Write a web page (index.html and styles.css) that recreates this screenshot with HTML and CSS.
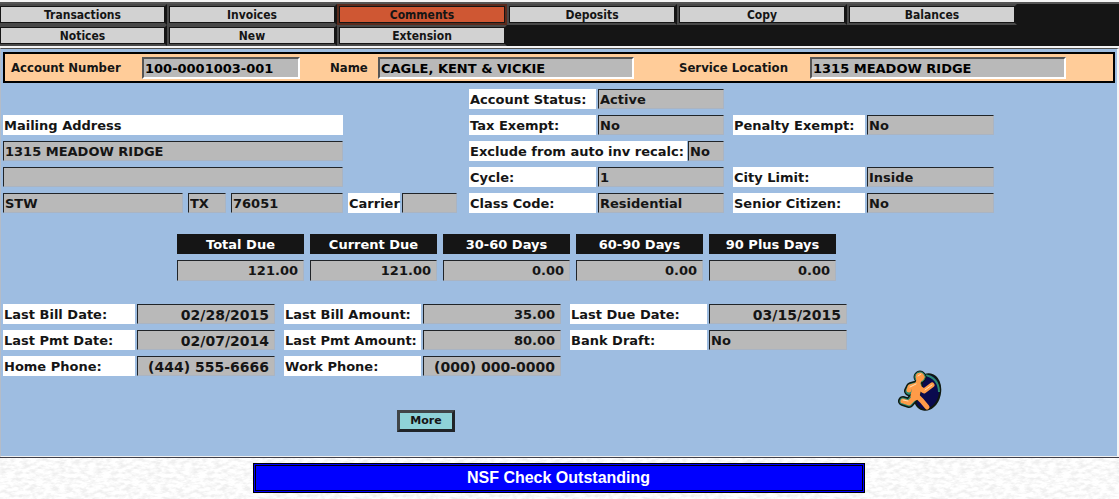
FILE: index.html
```
<!DOCTYPE html>
<html lang="en">
<head>
<meta charset="utf-8">
<title>Customer Account</title>
<link rel="stylesheet" href="styles.css">
</head>
<body>
<nav class="tabs" aria-label="Account sections">
  <button class="tab" type="button">Transactions</button>
  <button class="tab" type="button">Invoices</button>
  <button class="tab tab-active" type="button">Comments</button>
  <button class="tab" type="button">Deposits</button>
  <button class="tab" type="button">Copy</button>
  <button class="tab" type="button">Balances</button>
  <button class="tab" type="button">Notices</button>
  <button class="tab" type="button">New</button>
  <button class="tab" type="button">Extension</button>
</nav>

<main class="panel">
  <section class="account-bar">
    <label class="bar-label bar-wide" for="acct">Account Number</label>
    <input class="bar-input bar-number" id="acct" value="100-0001003-001" readonly>
    <label class="bar-label bar-name" for="name">Name</label>
    <input class="bar-input" id="name" value="CAGLE, KENT &amp; VICKIE" readonly>
    <label class="bar-label bar-wide bar-service" for="service">Service Location</label>
    <input class="bar-input" id="service" value="1315 MEADOW RIDGE" readonly>
  </section>

  <div class="details">
    <section class="address">
      <label class="label address-line" for="addr1">Mailing Address</label>
      <input class="value address-line" id="addr1" value="1315 MEADOW RIDGE" readonly>
      <input class="value address-line" aria-label="Address line 2" value="" readonly>
      <div class="city-row">
        <input class="value city" aria-label="City" value="STW" readonly>
        <input class="value state" aria-label="State" value="TX" readonly>
        <input class="value zip" aria-label="Zip" value="76051" readonly>
        <label class="label carrier-label" for="carrier">Carrier</label>
        <input class="value carrier" id="carrier" value="" readonly>
      </div>
    </section>

    <section class="status">
      <div class="pair"><label class="label" for="st">Account Status:</label><input class="value" id="st" value="Active" readonly></div>
      <div class="pair"><label class="label" for="tax">Tax Exempt:</label><input class="value" id="tax" value="No" readonly></div>
      <div class="pair pair-long"><label class="label" for="recalc">Exclude from auto inv recalc:</label><input class="value" id="recalc" value="No" readonly></div>
      <div class="pair"><label class="label" for="cycle">Cycle:</label><input class="value" id="cycle" value="1" readonly></div>
      <div class="pair"><label class="label" for="class">Class Code:</label><input class="value" id="class" value="Residential" readonly></div>
    </section>

    <section class="flags">
      <div class="pair pair-spaced"><label class="label" for="pen">Penalty Exempt:</label><input class="value" id="pen" value="No" readonly></div>
      <div class="pair pair-spaced"><label class="label" for="limit">City Limit:</label><input class="value" id="limit" value="Inside" readonly></div>
      <div class="pair"><label class="label" for="senior">Senior Citizen:</label><input class="value" id="senior" value="No" readonly></div>
    </section>
  </div>

  <table class="aging">
    <thead>
      <tr><th>Total Due</th><th>Current Due</th><th>30-60 Days</th><th>60-90 Days</th><th>90 Plus Days</th></tr>
    </thead>
    <tbody>
      <tr><td>121.00</td><td>121.00</td><td>0.00</td><td>0.00</td><td>0.00</td></tr>
    </tbody>
  </table>

  <section class="history">
    <div class="column column-first">
      <div class="pair"><label class="label" for="bill">Last Bill Date:</label><input class="value right large" id="bill" value="02/28/2015" readonly></div>
      <div class="pair"><label class="label" for="pmt">Last Pmt Date:</label><input class="value right large" id="pmt" value="02/07/2014" readonly></div>
      <div class="pair"><label class="label" for="home">Home Phone:</label><input class="value right large" id="home" value="(444) 555-6666" readonly></div>
    </div>
    <div class="column">
      <div class="pair"><label class="label" for="billamt">Last Bill Amount:</label><input class="value right" id="billamt" value="35.00" readonly></div>
      <div class="pair"><label class="label" for="pmtamt">Last Pmt Amount:</label><input class="value right" id="pmtamt" value="80.00" readonly></div>
      <div class="pair"><label class="label" for="work">Work Phone:</label><input class="value right large" id="work" value="(000) 000-0000" readonly></div>
    </div>
    <div class="column">
      <div class="pair"><label class="label" for="due">Last Due Date:</label><input class="value right large" id="due" value="03/15/2015" readonly></div>
      <div class="pair"><label class="label" for="draft">Bank Draft:</label><input class="value" id="draft" value="No" readonly></div>
    </div>
  </section>

  <div class="actions">
    <button class="more" type="button">More</button>
    <button class="exit" type="button" aria-label="Exit">
      <svg class="exit-icon" viewBox="0 0 44 44" aria-hidden="true">
        <ellipse cx="29" cy="22" rx="13" ry="18" fill="#0a0a4e" stroke="#10180f" stroke-width="2" transform="rotate(12 29 22)"/>
        <path d="M26 5C36 6 41 13 41 22" fill="none" stroke="#2c8a72" stroke-width="2"/>
        <g fill="none" stroke="#10180f" stroke-linecap="round" stroke-linejoin="round">
          <circle cx="22" cy="7" r="6" fill="#10180f"/>
          <path d="M20 15L13 17L11 21M19 17L17 26L11 33L5 31" stroke-width="10"/>
        </g>
        <g fill="none" stroke="#2c8a72" stroke-linecap="round" stroke-linejoin="round">
          <circle cx="22" cy="7" r="5" fill="#2c8a72"/>
          <path d="M20 15L13 17L11 21M19 17L17 26L11 33L5 31" stroke-width="7"/>
        </g>
        <g fill="none" stroke="#ff9b48" stroke-linecap="round" stroke-linejoin="round">
          <circle cx="22" cy="7" r="4" fill="#ff9b48"/>
          <path d="M21 10L19 16M19 15L12 17L11 20M20 17L26 21L34 15M17 27L11 33L5 31M19 26L24 31L29 37" stroke-width="5"/>
          <path d="M19 17L17 26" stroke-width="9"/>
        </g>
        <path d="M20 6L23 4M12 17L18 14M27 20L34 15M5 30L10 31" fill="none" stroke="#ffe0b0" stroke-width="1" stroke-linecap="round"/>
      </svg>
    </button>
  </div>
</main>

<footer class="footer">
  <p class="notice">NSF Check Outstanding</p>
</footer>
</body>
</html>
```
FILE: styles.css
```
* { box-sizing: border-box; }

body {
  margin: 0;
  min-height: 100vh;
  display: flex;
  flex-direction: column;
  background: #f4f4f4;
  color: #151515;
  font: bold 13px/20px Verdana, "DejaVu Sans", sans-serif;
}

input, button { font: inherit; color: inherit; margin: 0; border-radius: 0; }

.tabs {
  display: flex;
  flex-wrap: wrap;
  margin-top: 2px;
  padding-right: 99px;
  border-top: 2px solid #555;
  background: #151515;
}

.tab {
  flex: 0 0 170px;
  height: 21px;
  padding: 1px 0 0;
  border: 2px solid #484848;
  border-right-color: #151515;
  background: #d2d2d2;
  box-shadow: inset 0 0 0 1px #151515;
  font: bold 12px/14px Tahoma, "DejaVu Sans Condensed", "DejaVu Sans", sans-serif;
}

.tab:nth-child(6n + 1) { flex-basis: 167px; border-left: 0; }
.tab-active { background: #cf5733; border-color: #5a2a1c; }

.panel {
  flex: 0 0 auto;
  border-top: 1px solid #505050;
  border-right: 2px solid #f4f4f4;
  border-left: 1px solid #b4bcc8;
  border-bottom: 1px solid #f0f0f0;
  margin-top: 2px;
  padding: 3px 2px 24px;
  background: #9ebde1;
}

.account-bar {
  display: flex;
  align-items: center;
  height: 31px;
  padding-left: 5px;
  border: 2px solid #000;
  background: #fc9;
}

.bar-label { font: bold 13px/20px Tahoma, "DejaVu Sans Condensed", "DejaVu Sans", sans-serif; }
.bar-wide { flex: 0 0 132px; padding-left: 1px; }
.bar-name { flex: 0 0 48px; margin-left: 30px; }
.bar-service { margin-left: 44px; }

.bar-input {
  flex: 0 1 256px;
  min-width: 0;
  height: 22px;
  padding: 1px 1px 0;
  border: 2px solid;
  border-color: #555 #fff #fff #555;
  background: #b9b9b9;
  color: #000;
}
.bar-number { flex-basis: 158px; }

.details { display: flex; align-items: flex-start; margin-top: 6px; }
.address, .status, .flags, .column { display: flex; flex-direction: column; gap: 6px; }
.address { width: 454px; margin-top: 26px; }
.address-line { width: 340px; }
.city-row { display: flex; gap: 5px; }
.city { width: 180px; }
.state { width: 38px; }
.zip { width: 112px; }
.carrier-label { width: 52px; margin-right: -3px; }
.carrier { width: 55px; }
.status { width: 255px; margin-left: 12px; }
.flags { width: 261px; margin-left: 9px; }
.pair-spaced { margin-top: 26px; }

.label {
  height: 20px;
  padding: 1px 0 0 1px;
  background: #fff;
  line-height: 19px;
  white-space: nowrap;
}

.value {
  min-width: 0;
  height: 20px;
  padding: 1px 1px 0;
  border: 1px solid;
  border-color: #202428 #aab4c2 #aab4c2 #202428;
  background: #b9b9b9;
}
.right { padding-right: 5px; text-align: right; }
.large { font-size: 14px; }

.pair { display: grid; grid-template-columns: 127px 1fr; gap: 2px; }
.pair-long { grid-template-columns: 218px 1fr; gap: 1px; }
.flags .pair { grid-template-columns: 132px 1fr; }

.aging { margin: 15px 0 0 168px; border-spacing: 6px; }
.aging th, .aging td { width: 127px; height: 20px; padding: 1px 0 0; line-height: 18px; }
.aging th { background: #151515; color: #fff; text-align: center; }
.aging td {
  padding-right: 5px;
  border: 1px solid;
  border-color: #202428 #aab4c2 #aab4c2 #202428;
  background: #b9b9b9;
  text-align: right;
}

.history { display: flex; align-items: flex-start; gap: 9px; margin-top: 17px; }
.column { width: 277px; }
.column .pair { grid-template-columns: 137px 1fr; }
.column-first { width: 272px; }
.column-first .pair { grid-template-columns: 132px 1fr; }

.actions { display: flex; align-items: flex-end; margin-top: -6px; padding-left: 394px; height: 62px; }
.more {
  width: 58px;
  height: 22px;
  padding: 0;
  border: 3px solid;
  border-color: #404548 #202428 #202428 #404548;
  background: #8fd3d8;
  font-size: 11px;
  line-height: 14px;
}
.exit { align-self: flex-start; width: 44px; height: 44px; margin-left: 443px; padding: 0; border: 0; background: none; }
.exit-icon { display: block; width: 44px; height: 44px; }

.footer {
  flex: 1;
  padding: 5px 2px 6px 0;
  border-top: 1px solid #40404a;
  background: #f6f6f6 url("data:image/svg+xml,%3Csvg xmlns='http://www.w3.org/2000/svg' width='96' height='96'%3E%3Cfilter id='n' x='0' y='0' width='100%25' height='100%25'%3E%3CfeTurbulence type='fractalNoise' baseFrequency='.14 .3' numOctaves='3' stitchTiles='stitch'/%3E%3CfeColorMatrix values='0 0 0 0 .86 0 0 0 0 .86 0 0 0 0 .86 3 0 0 0 -1.2'/%3E%3C/filter%3E%3Crect width='96' height='96' fill='%23fff'/%3E%3Crect width='96' height='96' filter='url(%23n)'/%3E%3C/svg%3E");
}

.notice {
  width: 612px;
  max-width: 100%;
  height: 30px;
  margin: 0 auto;
  border: 1px solid #000;
  outline: 1px solid #000;
  outline-offset: -3px;
  background: #00f;
  color: #fff;
  font: bold 16px/28px Arial, "Liberation Sans", sans-serif;
  text-align: center;
}
```
